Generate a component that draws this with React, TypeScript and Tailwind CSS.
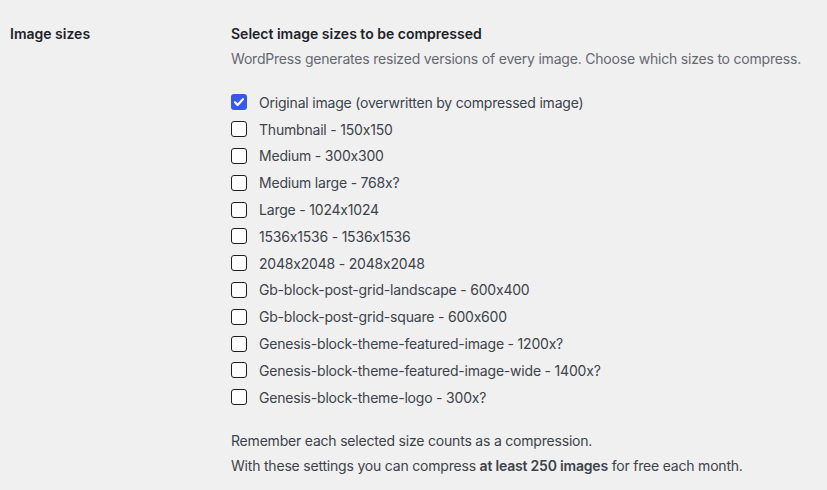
const SIZES: { label: string; checked?: boolean }[] = [
  { label: 'Original image (overwritten by compressed image)', checked: true },
  { label: 'Thumbnail - 150x150' },
  { label: 'Medium - 300x300' },
  { label: 'Medium large - 768x?' },
  { label: 'Large - 1024x1024' },
  { label: '1536x1536 - 1536x1536' },
  { label: '2048x2048 - 2048x2048' },
  { label: 'Gb-block-post-grid-landscape - 600x400' },
  { label: 'Gb-block-post-grid-square - 600x600' },
  { label: 'Genesis-block-theme-featured-image - 1200x?' },
  { label: 'Genesis-block-theme-featured-image-wide - 1400x?' },
  { label: 'Genesis-block-theme-logo - 300x?' },
];

function Checkbox({ checked }: { checked?: boolean }) {
  if (checked) {
    return (
      <span className="flex h-4 w-4 shrink-0 items-center justify-center rounded-[3px] bg-[#3858e9]">
        <svg viewBox="0 0 16 16" className="h-4 w-4" fill="none">
          <path d="M4 8.3l2.6 2.6L12 5.2" stroke="white" strokeWidth="2.2" strokeLinecap="round" strokeLinejoin="round" />
        </svg>
      </span>
    );
  }
  return <span className="block h-4 w-4 shrink-0 rounded-[3px] border border-[#1e1e1e] bg-white" />;
}

export default function App() {
  return (
    <div
      className="flex min-h-[490px] w-full bg-[#f0f0f1] text-[14px] tracking-[-0.2px] text-[#3c434a]"
      style={{ fontFamily: 'Inter, "Noto Sans", sans-serif', fontFeatureSettings: '"calt" 0' }}
    >
      <div className="w-[231px] shrink-0 pl-[10px] pt-[23px] font-semibold tracking-normal text-[#1d2327]">
        Image sizes
      </div>
      <div className="pt-[24px]">
        <h3 className="font-semibold leading-[19px] tracking-normal text-[#1d2327]">
          Select image sizes to be compressed
        </h3>
        <p className="mt-[6px] leading-[19px] text-[#646970]">
          WordPress generates resized versions of every image. Choose which sizes to compress.
        </p>
        <ul className="mt-[21px] flex flex-col">
          {SIZES.map((s) => (
            <li key={s.label} className="flex h-[26.8px] items-center gap-3">
              <Checkbox checked={s.checked} />
              <span>{s.label}</span>
            </li>
          ))}
        </ul>
        <p className="mt-[17px] leading-[25px]">Remember each selected size counts as a compression.</p>
        <p className="leading-[25px]">
          With these settings you can compress <strong className="font-semibold">at least 250 images</strong> for free
          each month.
        </p>
      </div>
    </div>
  );
}
